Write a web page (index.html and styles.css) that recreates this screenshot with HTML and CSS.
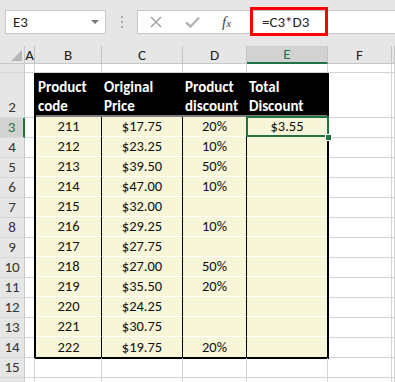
FILE: index.html
```html
<!DOCTYPE html>
<html lang="en">
<head>
  <meta charset="UTF-8">
  <title>Discount sheet</title>
  <link rel="stylesheet" href="styles.css">
</head>
<body>
  <div class="toolbar">
    <div class="name-box"><span>E3</span><span class="caret"></span></div>
    <div class="grip"><i></i><i></i><i></i></div>
    <div class="formula-bar">
      <div class="fx-buttons">
        <svg class="icon-cancel" width="12" height="12" viewBox="0 0 12 12"><path d="M1 1 L11 11 M11 1 L1 11" stroke="#a8a8a8" stroke-width="1.6" fill="none"/></svg>
        <svg class="icon-enter" width="15" height="12" viewBox="0 0 15 12"><path d="M1 6.5 L5.5 10.5 L14 1.5" stroke="#b4b4b4" stroke-width="2.4" fill="none"/></svg>
        <span class="fx"><i>f</i><i class="x">x</i></span>
      </div>
      <div class="formula"><span>=C3*D3</span></div>
    </div>
  </div>

  <div class="sheet">
    <!-- column headers -->
    <div class="corner"><svg width="25" height="18" viewBox="0 0 25 18"><polygon points="22,4 22,15 11,15" fill="#b7b7b7"/></svg></div>
    <div class="col-head">A</div>
    <div class="col-head">B</div>
    <div class="col-head">C</div>
    <div class="col-head">D</div>
    <div class="col-head active">E</div>
    <div class="col-head">F</div>
    <div class="col-head"></div>

    <!-- row 1 -->
    <div class="row-head short"><span>1</span></div>
    <div class="cell"></div><div class="cell"></div><div class="cell"></div><div class="cell"></div><div class="cell"></div><div class="cell"></div><div class="cell"></div>

    <!-- rows 2 - 14, the table block sits over columns B to E -->
    <div class="row-head">2</div><div class="cell"></div><div class="cell"></div><div class="cell"></div>
    <div class="row-head active">3</div><div class="cell"></div><div class="cell"></div><div class="cell"></div>
    <div class="row-head">4</div><div class="cell"></div><div class="cell"></div><div class="cell"></div>
    <div class="row-head">5</div><div class="cell"></div><div class="cell"></div><div class="cell"></div>
    <div class="row-head">6</div><div class="cell"></div><div class="cell"></div><div class="cell"></div>
    <div class="row-head">7</div><div class="cell"></div><div class="cell"></div><div class="cell"></div>
    <div class="row-head">8</div><div class="cell"></div><div class="cell"></div><div class="cell"></div>
    <div class="row-head">9</div><div class="cell"></div><div class="cell"></div><div class="cell"></div>
    <div class="row-head">10</div><div class="cell"></div><div class="cell"></div><div class="cell"></div>
    <div class="row-head">11</div><div class="cell"></div><div class="cell"></div><div class="cell"></div>
    <div class="row-head">12</div><div class="cell"></div><div class="cell"></div><div class="cell"></div>
    <div class="row-head">13</div><div class="cell"></div><div class="cell"></div><div class="cell"></div>
    <div class="row-head">14</div><div class="cell"></div><div class="cell"></div><div class="cell"></div>

    <div class="data-table">
      <div class="th">Product<br>code</div>
      <div class="th">Original<br>Price</div>
      <div class="th">Product<br>discount</div>
      <div class="th">Total<br>Discount</div>

      <div class="td">211</div><div class="td">$17.75</div><div class="td">20%</div><div class="td sel">$3.55</div>
      <div class="td">212</div><div class="td">$23.25</div><div class="td">10%</div><div class="td"></div>
      <div class="td">213</div><div class="td">$39.50</div><div class="td">50%</div><div class="td"></div>
      <div class="td">214</div><div class="td">$47.00</div><div class="td">10%</div><div class="td"></div>
      <div class="td">215</div><div class="td">$32.00</div><div class="td"></div><div class="td"></div>
      <div class="td">216</div><div class="td">$29.25</div><div class="td">10%</div><div class="td"></div>
      <div class="td">217</div><div class="td">$27.75</div><div class="td"></div><div class="td"></div>
      <div class="td">218</div><div class="td">$27.00</div><div class="td">50%</div><div class="td"></div>
      <div class="td">219</div><div class="td">$35.50</div><div class="td">20%</div><div class="td"></div>
      <div class="td">220</div><div class="td">$24.25</div><div class="td"></div><div class="td"></div>
      <div class="td">221</div><div class="td">$30.75</div><div class="td"></div><div class="td"></div>
      <div class="td last">222</div><div class="td last">$19.75</div><div class="td last">20%</div><div class="td last"></div>
    </div>

    <!-- rows 15 - 16 (16 is cut by the window, its label doesn't show) -->
    <div class="row-head">15</div>
    <div class="cell"></div><div class="cell"></div><div class="cell"></div><div class="cell"></div><div class="cell"></div><div class="cell"></div><div class="cell"></div>
    <div class="row-head"></div>
    <div class="cell"></div><div class="cell"></div><div class="cell"></div><div class="cell"></div><div class="cell"></div><div class="cell"></div><div class="cell"></div>
  </div>
</body>
</html>
```

FILE: styles.css
```css
:root {
  --chrome-bg: #e6e6e6;
  --head-active: #d2d2d2;
  --grid-line: #d4d4d4;
  --excel-green: #217346;
  --cream: #f7f6d8;
  --text-color: #222;
}

body {
  margin: 0;
  width: 395px;
  height: 382px;
  overflow: hidden;
  background: #fff;
  font-family: Carlito, Calibri, Lato, 'Liberation Sans', sans-serif;
  font-size: 14.5px;
  color: var(--text-color);
}

/* name box + formula bar */
.toolbar {
  height: 46px;
  box-sizing: border-box;
  padding: 10px 0 0 5px;
  background: var(--chrome-bg);
  display: flex;
  align-items: flex-start;
}

.name-box {
  width: 101px;
  height: 24px;
  box-sizing: border-box;
  background: #fff;
  border: 1px solid #c6c6c6;
  display: flex;
  align-items: center;
  justify-content: space-between;
  padding: 0 6px 0 7px;
  font-size: 15px;
}

.caret {
  width: 0;
  height: 0;
  border-left: 4px solid transparent;
  border-right: 4px solid transparent;
  border-top: 4px solid #777;
}

.grip {
  margin-left: 15px;
  height: 24px;
  display: flex;
  flex-direction: column;
  justify-content: center;
  gap: 3px;
}

.grip i {
  width: 2px;
  height: 2px;
  background: #a8a8a8;
}

.formula-bar {
  margin-left: 14px;
  flex: 1;
  height: 24px;
  box-sizing: border-box;
  background: #fff;
  border: 1px solid #c6c6c6;
  border-right: none;
  display: flex;
}

.fx-buttons {
  width: 112px;
  display: flex;
  align-items: center;
  padding-left: 12px;
  box-sizing: border-box;
}

.icon-enter {
  margin-left: 23px;
}

.fx {
  margin-left: 22px;
  font-family: 'Liberation Serif', serif;
  font-size: 15px;
  color: #444;
}

.fx .x {
  font-size: 11px;
}

.formula {
  width: 78px;
  height: 29px;
  margin-top: -4px;
  box-sizing: border-box;
  border: 3px solid #ff0000;
  padding-left: 9px;
  display: flex;
  align-items: center;
  font-size: 15px;
}

/* worksheet grid */
.sheet {
  display: grid;
  grid-template-columns: 25px 10px 67px 81px 64px 81px 64px 1fr;
  grid-template-rows: 18px 9px 45px repeat(12, 20px) 20px 20px;
}

.corner,
.col-head,
.row-head {
  background: var(--chrome-bg);
  box-sizing: border-box;
}

.corner {
  border-right: 1px solid #c8c8c8;
  border-bottom: 1px solid #c8c8c8;
}

.corner svg {
  display: block;
}

.col-head {
  border-right: 1px solid #c4c4c4;
  border-bottom: 1px solid #c8c8c8;
  display: flex;
  align-items: center;
  justify-content: center;
  font-size: 15px;
  color: #222;
}

.col-head.active {
  background: var(--head-active);
  border-bottom: 2px solid var(--excel-green);
  color: var(--excel-green);
}

.row-head {
  border-right: 1px solid #c8c8c8;
  border-bottom: 1px solid #d8d8d8;
  display: flex;
  align-items: flex-end;
  justify-content: center;
  padding-bottom: 1px;
  font-size: 15px;
  color: #333;
  line-height: 18px;
}

.row-head.short {
  overflow: hidden;
  align-items: flex-start;
  line-height: 18px;
}

.row-head.short span {
  margin-top: -14px;
}

.row-head.active {
  background: var(--head-active);
  border-right: 2px solid var(--excel-green);
  color: var(--excel-green);
}

.cell {
  box-sizing: border-box;
  border-right: 1px solid var(--grid-line);
  border-bottom: 1px solid var(--grid-line);
}

/* the formatted table B2:E14 */
.data-table {
  grid-column: 3 / span 4;
  grid-row: 3 / span 13;
  margin: 0 -1px -1px -1px;
  border: 2px solid #000;
  display: grid;
  grid-template-columns: 66px 81px 64px 1fr;
  grid-template-rows: 42px repeat(12, 20px);
}

.th {
  background: #000;
  border-bottom: 2px solid #7f7f7f;
  color: #fff;
  font-weight: bold;
  font-size: 15px;
  line-height: 19px;
  padding: 3px 0 0 2px;
}

.td {
  box-sizing: border-box;
  background: var(--cream);
  border-bottom: 1px solid #fff;
  border-right: 1px solid #000;
  display: flex;
  align-items: flex-end;
  justify-content: center;
  padding-bottom: 1px;
  line-height: 18px;
  color: #111;
}

.td:nth-child(4n) {
  border-right: none;
}

.td.last {
  border-bottom: none;
}

.sel {
  position: relative;
}

.sel::after {
  content: '';
  position: absolute;
  left: -1px;
  top: -1px;
  right: -2px;
  bottom: -1px;
  border: 2px solid var(--excel-green);
}

.sel::before {
  content: '';
  position: absolute;
  right: -5px;
  bottom: -5px;
  width: 5px;
  height: 5px;
  background: var(--excel-green);
  border: 1px solid #fff;
  z-index: 1;
}
```
